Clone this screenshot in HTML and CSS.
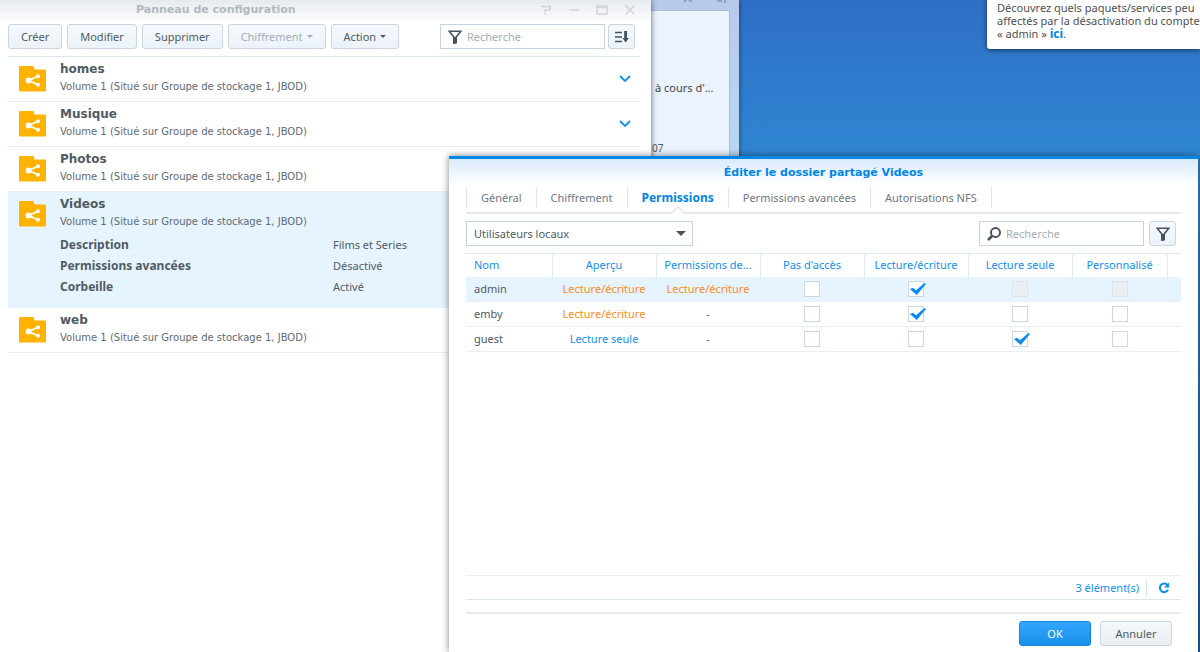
FILE: index.html
```html
<!DOCTYPE html>
<html lang="fr">
<head>
    <meta charset="UTF-8">
    <meta name="viewport" content="width=device-width, initial-scale=1.0">
    <title>Panneau de configuration</title>
    <link rel="stylesheet" href="styles.css">
</head>
<body>
    <svg class="sprite" aria-hidden="true">
        <symbol id="shared-folder" viewBox="0 0 27 26">
            <path d="M0 1Q0 0 1 0H14.500L15.500 3.500H26Q27 3.500 27 4.500V24.500Q27 25.500 26 25.500H1Q0 25.500 0 24.500Z" fill="#ffb300"/>
            <path d="M19 10.300L9.500 14.500L19 18.800" fill="none" stroke="#fff" stroke-width="1.800"/>
            <circle cx="9.500" cy="14.500" r="2.900" fill="#fff"/>
            <circle cx="19" cy="10.300" r="2" fill="#fff"/>
            <circle cx="19" cy="18.800" r="2" fill="#fff"/>
        </symbol>
        <symbol id="funnel" viewBox="0 0 14 14">
            <path d="M1.200 1.200H12.800L8.200 7V12.500L5.800 13V7Z" fill="none" stroke="#46525f" stroke-width="1.600"/>
            <path d="M7 7V13.500" stroke="#46525f" stroke-width="2.500"/>
        </symbol>
        <symbol id="chevron" viewBox="0 0 12 8">
            <path d="M1 1L6 6L11 1" fill="none" stroke="#1190ea" stroke-width="1.800"/>
        </symbol>
    </svg>

    <!-- Widgets behind the panel -->
    <div class="widgets">
        <div class="widgets-tools">
            <svg width="8" height="14" viewBox="0 0 8 14"><path d="M0 13L6 7M4 10L8 13" stroke="#8492ab" stroke-width="1.500"/></svg>
            <svg width="10" height="14" viewBox="0 0 10 14"><path d="M1 12H6M9 8V14" stroke="#8492ab" stroke-width="1.500"/></svg>
        </div>
        <div class="widgets-body">
            <p class="widget-text">à cours d'...</p>
            <p class="widget-time">07</p>
        </div>
    </div>

    <div class="notification">
        <p>Découvrez quels paquets/services peu<br>affectés par la désactivation du compte<br>« admin » <a href="#">ici</a>.</p>
    </div>

    <main class="panel">
        <header class="panel-header">
            <h1>Panneau de configuration</h1>
            <div class="window-tools">
                <button type="button" aria-label="Aide"><svg width="12" height="10" viewBox="0 0 12 10"><path d="M1 1.500H10V5H5V7M5 8V9.500" fill="none" stroke="#d0d5da" stroke-width="1.500"/></svg></button>
                <button type="button" aria-label="Réduire"><svg width="12" height="10" viewBox="0 0 12 10"><path d="M1 5H11" stroke="#d0d5da" stroke-width="1.500"/></svg></button>
                <button type="button" aria-label="Agrandir"><svg width="12" height="10" viewBox="0 0 12 10"><path d="M1 1H11V9H1ZM1 2.500H11" fill="none" stroke="#d0d5da" stroke-width="1.500"/></svg></button>
                <button type="button" aria-label="Fermer"><svg width="12" height="10" viewBox="0 0 12 10"><path d="M1.500 0.500L10.500 9.500M10.500 0.500L1.500 9.500" stroke="#d0d5da" stroke-width="1.500"/></svg></button>
            </div>
        </header>

        <div class="toolbar">
            <button type="button" class="btn">Créer</button>
            <button type="button" class="btn">Modifier</button>
            <button type="button" class="btn">Supprimer</button>
            <button type="button" class="btn" disabled>Chiffrement <span class="caret"></span></button>
            <button type="button" class="btn">Action <span class="caret"></span></button>
            <div class="toolbar-search">
                <label class="search">
                    <svg width="14" height="14"><use href="#funnel"/></svg>
                    <input type="text" placeholder="Recherche" aria-label="Recherche">
                </label>
                <button type="button" class="btn btn-icon" aria-label="Trier">
                    <svg width="14" height="12" viewBox="0 0 14 12"><path d="M0 1.500H7M0 6H7M0 10.500H7" stroke="#46525f" stroke-width="1.700"/><path d="M9.200 0H12V7H14L10.600 11.500L7.500 7H9.200Z" fill="#46525f"/></svg>
                </button>
            </div>
        </div>

        <ul class="folders">
            <li class="folder">
                <svg class="folder-icon"><use href="#shared-folder"/></svg>
                <div class="folder-info">
                    <h2>homes</h2>
                    <p>Volume 1 (Situé sur Groupe de stockage 1, JBOD)</p>
                </div>
                <button type="button" class="expand" aria-label="Détails"><svg width="12" height="8"><use href="#chevron"/></svg></button>
            </li>
            <li class="folder">
                <svg class="folder-icon"><use href="#shared-folder"/></svg>
                <div class="folder-info">
                    <h2>Musique</h2>
                    <p>Volume 1 (Situé sur Groupe de stockage 1, JBOD)</p>
                </div>
                <button type="button" class="expand" aria-label="Détails"><svg width="12" height="8"><use href="#chevron"/></svg></button>
            </li>
            <li class="folder">
                <svg class="folder-icon"><use href="#shared-folder"/></svg>
                <div class="folder-info">
                    <h2>Photos</h2>
                    <p>Volume 1 (Situé sur Groupe de stockage 1, JBOD)</p>
                </div>
            </li>
            <li class="folder selected">
                <svg class="folder-icon"><use href="#shared-folder"/></svg>
                <div class="folder-info">
                    <h2>Videos</h2>
                    <p>Volume 1 (Situé sur Groupe de stockage 1, JBOD)</p>
                    <dl class="details">
                        <dt>Description</dt><dd>Films et Series</dd>
                        <dt>Permissions avancées</dt><dd>Désactivé</dd>
                        <dt>Corbeille</dt><dd>Activé</dd>
                    </dl>
                </div>
            </li>
            <li class="folder">
                <svg class="folder-icon"><use href="#shared-folder"/></svg>
                <div class="folder-info">
                    <h2>web</h2>
                    <p>Volume 1 (Situé sur Groupe de stockage 1, JBOD)</p>
                </div>
            </li>
        </ul>
    </main>

    <section class="dialog" role="dialog" aria-labelledby="dialogTitle">
        <h2 class="dialog-title" id="dialogTitle">Éditer le dossier partagé Videos</h2>

        <nav class="tabs">
            <a href="#">Général</a>
            <a href="#">Chiffrement</a>
            <a href="#" class="active">Permissions</a>
            <a href="#">Permissions avancées</a>
            <a href="#">Autorisations NFS</a>
        </nav>

        <div class="filters">
            <div class="select">
                <select aria-label="Type d'utilisateurs">
                    <option>Utilisateurs locaux</option>
                </select>
                <svg width="10" height="5" viewBox="0 0 10 5"><path d="M0 0H10L5 5Z" fill="#46525f"/></svg>
            </div>
            <label class="search">
                <svg width="14" height="14" viewBox="0 0 14 14"><circle cx="8.500" cy="5.500" r="4.500" fill="none" stroke="#46525f" stroke-width="1.900"/><path d="M5 9L1 13" stroke="#46525f" stroke-width="2.500"/></svg>
                <input type="text" placeholder="Recherche" aria-label="Recherche">
            </label>
            <button type="button" class="btn btn-icon" aria-label="Filtrer"><svg width="14" height="14"><use href="#funnel"/></svg></button>
        </div>

        <table class="permissions">
            <colgroup>
                <col class="col-name"><col class="col"><col class="col"><col class="col"><col class="col"><col class="col"><col class="col-custom"><col>
            </colgroup>
            <thead>
                <tr>
                    <th>Nom</th>
                    <th>Aperçu</th>
                    <th>Permissions de...</th>
                    <th>Pas d'accès</th>
                    <th>Lecture/écriture</th>
                    <th>Lecture seule</th>
                    <th>Personnalisé</th>
                    <th></th>
                </tr>
            </thead>
            <tbody>
                <tr class="selected">
                    <td>admin</td>
                    <td class="write">Lecture/écriture</td>
                    <td class="write">Lecture/écriture</td>
                    <td><input type="checkbox" aria-label="admin : Pas d'accès"></td>
                    <td><input type="checkbox" aria-label="admin : Lecture/écriture" checked></td>
                    <td><input type="checkbox" aria-label="admin : Lecture seule" disabled></td>
                    <td><input type="checkbox" aria-label="admin : Personnalisé" disabled></td>
                    <td></td>
                </tr>
                <tr>
                    <td>emby</td>
                    <td class="write">Lecture/écriture</td>
                    <td>-</td>
                    <td><input type="checkbox" aria-label="emby : Pas d'accès"></td>
                    <td><input type="checkbox" aria-label="emby : Lecture/écriture" checked></td>
                    <td><input type="checkbox" aria-label="emby : Lecture seule"></td>
                    <td><input type="checkbox" aria-label="emby : Personnalisé"></td>
                    <td></td>
                </tr>
                <tr>
                    <td>guest</td>
                    <td class="read">Lecture seule</td>
                    <td>-</td>
                    <td><input type="checkbox" aria-label="guest : Pas d'accès"></td>
                    <td><input type="checkbox" aria-label="guest : Lecture/écriture"></td>
                    <td><input type="checkbox" aria-label="guest : Lecture seule" checked></td>
                    <td><input type="checkbox" aria-label="guest : Personnalisé"></td>
                    <td></td>
                </tr>
            </tbody>
        </table>

        <div class="status">
            <span>3 élément(s)</span>
            <button type="button" class="refresh" aria-label="Actualiser">
                <svg width="12" height="12" viewBox="0 0 12 12"><path d="M9.600 3.200A4.300 4.300 0 1 0 10 7.800" fill="none" stroke="#1190ea" stroke-width="2.100"/><path d="M11 0.500V5.500H6Z" fill="#1190ea"/></svg>
            </button>
        </div>

        <footer class="dialog-footer">
            <button type="button" class="btn btn-primary">OK</button>
            <button type="button" class="btn btn-cancel">Annuler</button>
        </footer>
    </section>
</body>
</html>
```
FILE: styles.css
```css
* {
    margin: 0;
    padding: 0;
    box-sizing: border-box;
}

body {
    position: relative;
    height: 100vh;
    overflow: hidden;
    font-family: "Noto Sans", sans-serif;
    font-size: 11px;
    line-height: 16px;
    color: #505a64;
    background: linear-gradient(180deg, #2f6fc6 0, #2f86d3 156px, #1b5ca8 100%);
}

button,
input,
select {
    font: inherit;
    color: inherit;
}

button {
    cursor: pointer;
}

svg {
    display: block;
    flex: none;
}

.sprite {
    position: absolute;
    width: 0;
    height: 0;
}

/* Widgets */
.widgets {
    position: absolute;
    top: 0;
    left: 0;
    width: 739px;
    height: 400px;
    padding: 0 9px;
    background: linear-gradient(180deg, #b8caec, #b8d7f2 160px);
    box-shadow: 0 0 5px rgba(0, 0, 0, 0.5);
}

.widgets-tools {
    display: flex;
    justify-content: flex-end;
    align-items: flex-end;
    gap: 24px;
    height: 10px;
    padding: 0 4px 7px 0;
}

.widgets-body {
    height: 380px;
    padding: 69px 0 0 642px;
    background: #ebf3fd;
    border: 1px solid #a9bedb;
}

.widget-text {
    padding-left: 3px;
    color: #444;
}

.widget-time {
    margin-top: 44px;
    font-size: 10px;
}

.notification {
    position: absolute;
    top: -20px;
    right: 0;
    left: 987px;
    padding: 21px 0 9px 10px;
    overflow: hidden;
    line-height: 13px;
    white-space: nowrap;
    color: #505050;
    background: #fff;
    border-bottom-left-radius: 3px;
    box-shadow: 0 1px 5px rgba(0, 0, 0, 0.6);
}

.notification a {
    color: #0086e5;
    font-size: 12px;
    font-weight: bold;
    text-decoration: none;
}

/* Control panel window */
.panel {
    position: absolute;
    top: 0;
    left: 0;
    width: 651px;
    height: 100%;
    padding: 0 11px 0 8px;
    background: linear-gradient(180deg, #e6eaf0, #fff 24px);
    box-shadow: 0 0 6px rgba(0, 0, 0, 0.6);
}

.panel-header {
    display: flex;
    align-items: center;
    justify-content: space-between;
    height: 20px;
}

.panel-header h1 {
    padding-left: 128px;
    font-family: "DejaVu Sans", sans-serif;
    font-size: 11px;
    color: #b0b8c0;
}

.window-tools {
    display: flex;
    gap: 16px;
    padding-right: 4px;
}

.window-tools button,
.expand,
.refresh {
    background: none;
    border: none;
}

.toolbar {
    display: flex;
    gap: 5px;
    padding: 4px 5px 7px 0;
    border-bottom: 1px solid #dce6ef;
}

.btn {
    display: flex;
    align-items: center;
    justify-content: center;
    height: 25px;
    padding: 0 12px;
    color: #505a64;
    background: linear-gradient(180deg, #f5f9fd, #ebf2f8);
    border: 1px solid #c9d5e1;
    border-radius: 3px;
}

.btn:disabled {
    color: #a3adb8;
}

.caret {
    margin-left: 4px;
    border: 3px solid transparent;
    border-top-color: currentColor;
    border-bottom: none;
}

.btn-icon {
    width: 27px;
    padding: 0;
}

.search {
    display: flex;
    align-items: center;
    gap: 5px;
    width: 165px;
    height: 25px;
    padding: 0 7px;
    background: #fff;
    border: 1px solid #c6d3e0;
}

.toolbar-search {
    display: flex;
    gap: 3px;
    margin-left: auto;
}

.search input {
    flex: 1;
    min-width: 0;
    border: none;
    outline: none;
    background: none;
}

.search input::placeholder {
    color: #a3adb8;
}

.folders {
    list-style: none;
}

.folder {
    display: flex;
    min-height: 45px;
    padding: 4px 9px 0 11px;
    border-bottom: 1px solid #e6eef5;
}

.folder.selected {
    background: #e6f4ff;
    border-color: #e6f4ff;
}

.folder-icon {
    width: 27px;
    height: 26px;
    margin-top: 5px;
}

.folder-info {
    flex: 1;
    padding-left: 14px;
}

.folder h2 {
    font-family: "DejaVu Sans", sans-serif;
    font-size: 12px;
    line-height: 16px;
}

.folder p {
    margin-top: 2px;
    font-family: "DejaVu Sans", sans-serif;
    font-size: 10px;
    line-height: 16px;
    color: #606a74;
}

.expand {
    align-self: center;
    padding-bottom: 4px;
}

.details {
    display: grid;
    grid-template-columns: 273px 1fr;
    padding: 4px 0 10px;
    line-height: 21px;
}

.details dt {
    font-size: 12px;
    font-weight: bold;
}

/* Shared folder dialog */
.dialog {
    position: absolute;
    top: 156px;
    right: 2px;
    bottom: 0;
    left: 449px;
    display: flex;
    flex-direction: column;
    padding: 0 17px;
    background: linear-gradient(180deg, #d8eafa, #fff 26px);
    border-top: 3px solid #0086e5;
    box-shadow: 0 0 7px rgba(0, 0, 0, 0.5);
}

.dialog-title {
    font-family: "DejaVu Sans", sans-serif;
    font-size: 11px;
    line-height: 28px;
    text-align: center;
    color: #0086e5;
}

.tabs {
    display: flex;
    height: 27px;
    border-bottom: 2px solid #e6e8ea;
}

.tabs a {
    position: relative;
    height: 21px;
    padding: 0 14px;
    line-height: 21px;
    color: #6e7882;
    text-decoration: none;
    border-right: 1px solid #dde6ee;
}

.tabs a:first-child {
    border-left: 1px solid #dde6ee;
}

.tabs a.active {
    font-size: 12px;
    font-weight: bold;
    color: #0086e5;
}

.tabs a.active::after {
    content: "";
    position: absolute;
    bottom: -10px;
    left: calc(50% - 5px);
    width: 9px;
    height: 9px;
    background: #fff;
    border: 1px solid #dfe2e5;
    border-right: none;
    border-bottom: none;
    transform: rotate(45deg);
}

.filters {
    display: flex;
    gap: 5px;
    padding: 7px 5px 7px 0;
    position: relative;
    background: #fff;
}

.select {
    position: relative;
    width: 227px;
    margin-right: auto;
}

.select select {
    width: 100%;
    height: 25px;
    padding: 0 7px;
    appearance: none;
    background: #fff;
    border: 1px solid #c6d3e0;
}

.select svg {
    position: absolute;
    top: 10px;
    right: 7px;
    pointer-events: none;
}

.permissions {
    width: 100%;
    table-layout: fixed;
    border-collapse: separate;
    border-spacing: 0;
    border-top: 1px solid #dce6ef;
}

.col-name {
    width: 87px;
}

.col {
    width: 104px;
}

.col-custom {
    width: 95px;
}

.permissions th {
    height: 23px;
    padding: 0 1px 2px 0;
    font-weight: normal;
    color: #1190ea;
    border-right: 1px solid #e2eaf2;
}

.permissions th:last-child {
    border-right: none;
}

.permissions td {
    height: 25px;
    padding-right: 2px;
    text-align: center;
    border-bottom: 1px solid #e9eff5;
}

.permissions th:first-child,
.permissions td:first-child {
    padding-left: 8px;
    text-align: left;
}

.permissions .selected td {
    background: #e6f4ff;
}

.permissions .write {
    color: #ff8a14;
}

.permissions .read {
    color: #1190ea;
}

.permissions input {
    position: relative;
    display: block;
    width: 16px;
    height: 16px;
    margin: 0 auto;
    appearance: none;
    background: #fff;
    border: 1px solid #ccd7e2;
}

.permissions input:disabled {
    background: #ebeff3;
    border-color: #dde4ea;
}

.permissions input:checked::after {
    content: "";
    position: absolute;
    top: 1px;
    left: 1px;
    width: 16px;
    height: 12px;
    background: #0a8cf0;
    clip-path: polygon(0 50%, 19% 40%, 38% 60%, 90% 0, 100% 8%, 42% 100%);
}

.status {
    display: flex;
    align-items: center;
    justify-content: flex-end;
    height: 25px;
    margin-top: auto;
    color: #1190ea;
    border-top: 1px solid #e6eef5;
    border-bottom: 1px solid #dce6ef;
}

.refresh {
    margin-left: 7px;
    padding: 3px 11px;
    border-left: 1px solid #dce6ef;
}

.dialog-footer {
    display: flex;
    justify-content: flex-end;
    gap: 9px;
    margin-top: 12px;
    padding: 7px 9px 6px 0;
    border-top: 2px solid #ebebeb;
}

.dialog-footer .btn {
    width: 72px;
}

.dialog-footer .btn-primary {
    color: #fff;
    background: linear-gradient(180deg, #33a6ff, #1990ea);
    border-color: #1585da;
}

.dialog-footer .btn-cancel {
    background: linear-gradient(180deg, #f5f8fb, #e9eef3);
}
```
